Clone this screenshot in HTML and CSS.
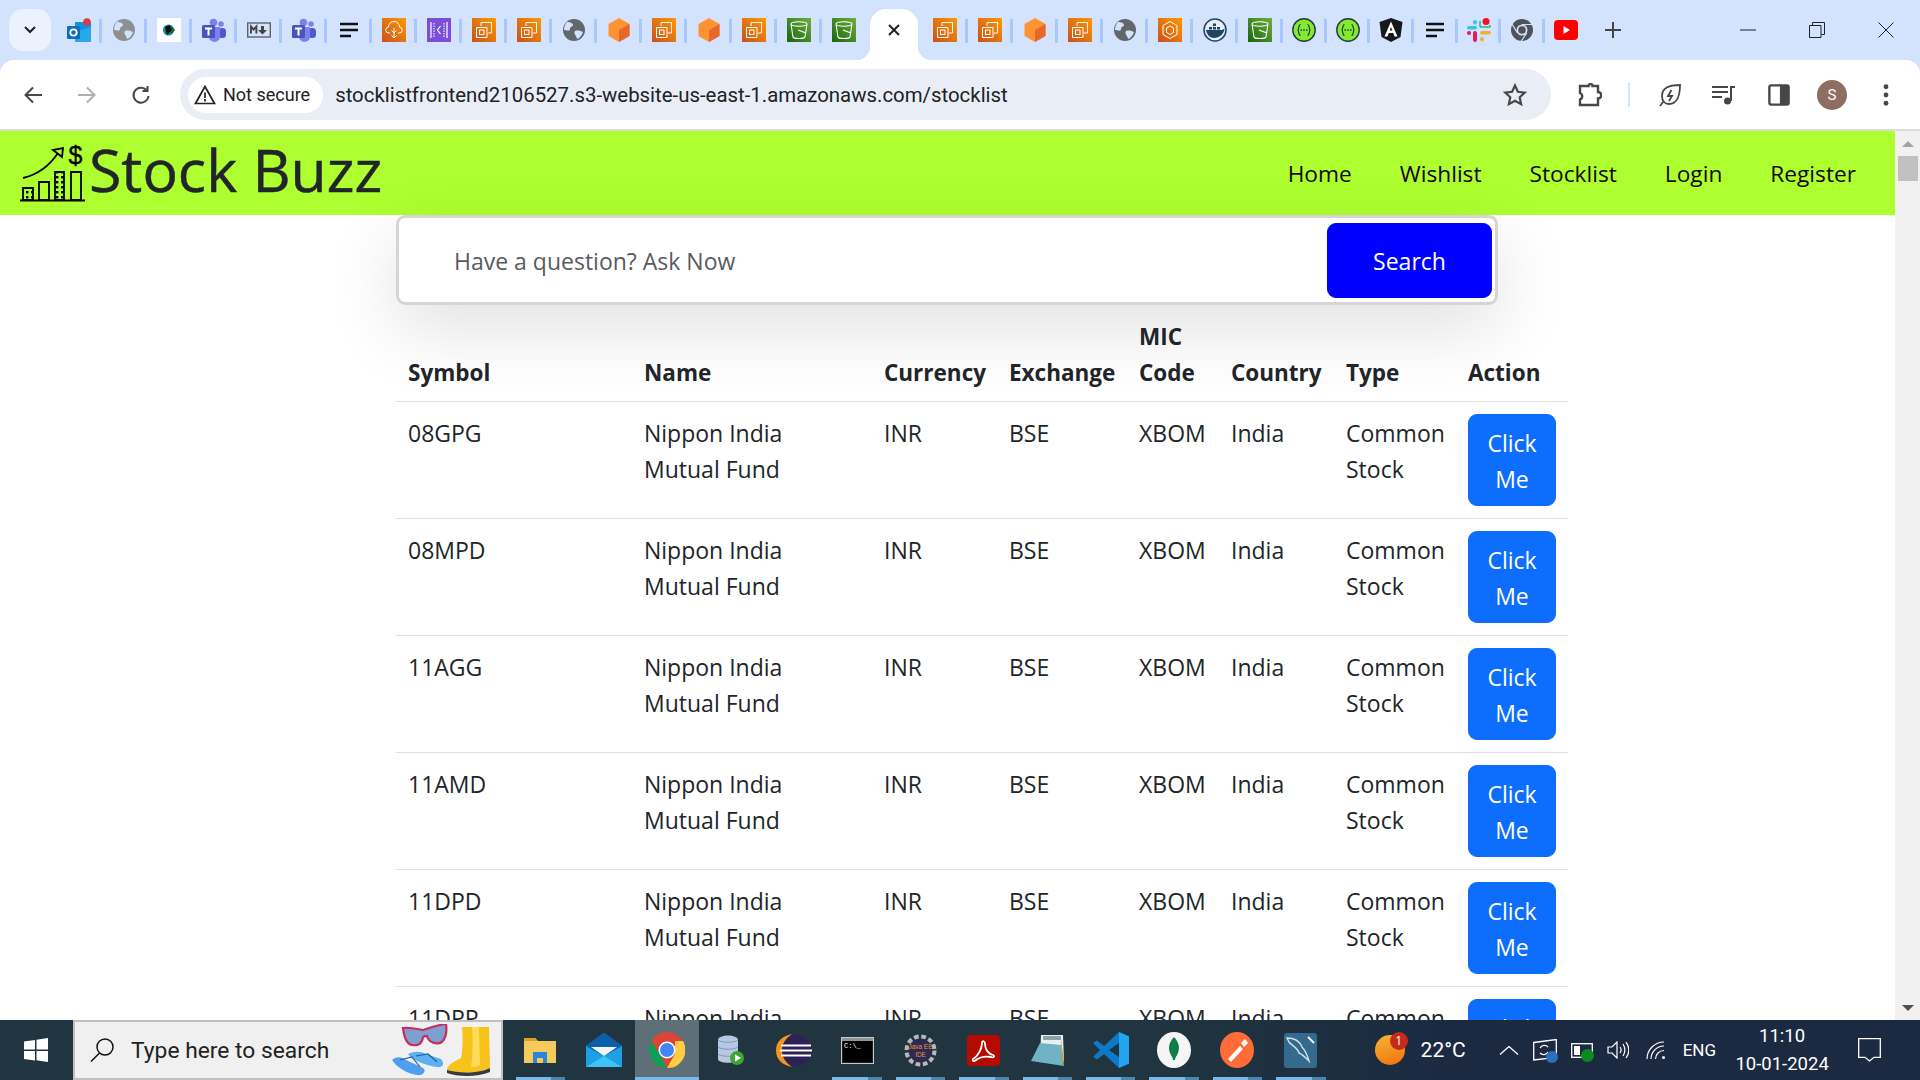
FILE: index.html
```html
<!DOCTYPE html>
<html lang="en">
<head>
    <meta charset="UTF-8">
    <title>Stock Buzz</title>
    <link rel="stylesheet" href="styles.css">
</head>
<body>
    <svg class="defs" width="0" height="0">
        <defs>
            <linearGradient id="orange" x1="0" y1="1" x2="1" y2="0"><stop offset="0" stop-color="#c8511b"/><stop offset="1" stop-color="#ff9900"/></linearGradient>
            <linearGradient id="green" x1="0" y1="1" x2="1" y2="0"><stop offset="0" stop-color="#1b660f"/><stop offset="1" stop-color="#6cae3e"/></linearGradient>
            <pattern id="dots" width="5" height="5" patternUnits="userSpaceOnUse"><rect x="1" y="1" width="2.400" height="2.400" fill="#000"/></pattern>
        </defs>
        <symbol id="ec2" viewBox="0 0 24 24">
            <rect width="24" height="24" fill="url(#orange)"/>
            <path d="M9 8V4.500h10.500V15H16M4.500 9.500H15V19.500H4.500z" fill="none" stroke="#fff" stroke-width="1"/>
            <rect x="7.500" y="12" width="4.500" height="4.500" fill="none" stroke="#fff" stroke-width="1"/>
        </symbol>
        <symbol id="s3" viewBox="0 0 24 24">
            <rect width="24" height="24" fill="url(#green)"/>
            <path d="M4 6c0-3 16-3 16 0l-2 13c-.5 2-11.500 2-12 0zM4 6c0 3 16 3 16 0M11 12l8 3" fill="none" stroke="#fff" stroke-width="1.100"/>
        </symbol>
        <symbol id="globe" viewBox="0 0 24 24">
            <circle cx="12" cy="12" r="11" fill="#63676b"/>
            <path d="M5 4c3 0 6 1 6 3s-3 1-3 4-4 1-6 1c0-3 1-6 3-8zM13 13c3-1 6 0 8 1-1 3-3 6-6 7 0-3-4-5-2-8z" fill="#d3e3fd"/>
        </symbol>
        <symbol id="globe-light" viewBox="0 0 24 24">
            <circle cx="12" cy="12" r="11" fill="#8f8f8f"/>
            <path d="M5 4c3 0 6 1 6 3s-3 1-3 4-4 1-6 1c0-3 1-6 3-8zM13 13c3-1 6 0 8 1-1 3-3 6-6 7 0-3-4-5-2-8z" fill="#d3e3fd"/>
        </symbol>
        <symbol id="cube" viewBox="0 0 24 24">
            <path d="M12 0l10.500 6v12L12 24 1.500 18V6z" fill="#ff9233"/>
            <path d="M12 12l10.500-6v12L12 24z" fill="#e8682a"/>
        </symbol>
        <symbol id="teams" viewBox="0 0 24 24">
            <circle cx="19" cy="6" r="2.800" fill="#7b83eb"/>
            <circle cx="11.500" cy="4.500" r="3.800" fill="#7b83eb"/>
            <rect x="16" y="10" width="8" height="10" rx="3.500" fill="#5059c9"/>
            <path d="M7 9h11v10a5.500 5 0 0 1-11 0z" fill="#7b83eb"/>
            <rect x="0" y="7" width="13" height="13" rx="1.500" fill="#4b53bc"/>
            <path d="M3 10.500h7M6.500 10.500V17.500" stroke="#fff" stroke-width="2"/>
        </symbol>
        <symbol id="lines" viewBox="0 0 24 24">
            <path d="M3 6h18M3 12h18M3 18h11" stroke="#111" stroke-width="2.400"/>
        </symbol>
        <symbol id="swagger" viewBox="0 0 24 24">
            <circle cx="12" cy="12" r="11.200" fill="#85ea2d" stroke="#25364a" stroke-width="1.400"/>
            <path d="M8.500 6.500c-2.500 0-1 5.500-3 5.500 2 0 .5 5.500 3 5.500M15.500 6.500c2.500 0 1 5.500 3 5.500-2 0-.5 5.500-3 5.500" fill="none" stroke="#173647" stroke-width="1.200"/>
            <path d="M8.500 12h7" stroke="#173647" stroke-width="1.400" stroke-dasharray="1.400 1.400"/>
        </symbol>
    </svg>

    <div class="tabstrip">
        <div class="tab-search"><svg width="14" height="10" viewBox="0 0 14 10"><path d="M2 2l5 5 5-5" fill="none" stroke="#202124" stroke-width="2"/></svg></div>
        <div class="tabs">
            <div class="tab">
                <svg class="fav" viewBox="0 0 24 24"><rect x="8" y="4" width="16" height="20" fill="#1490df"/><path d="M8 14l16-5v15H8z" fill="#28a8ea"/><rect x="0" y="8" width="13" height="13" rx="1" fill="#0f6cbd"/><circle cx="6.500" cy="14.500" r="3.200" fill="none" stroke="#fff" stroke-width="1.800"/><circle cx="20" cy="4" r="3.800" fill="#d93a45"/></svg>
            </div>
            <div class="tab"><svg class="fav"><use href="#globe-light"/></svg></div>
            <div class="tab">
                <svg class="fav" viewBox="0 0 24 24"><rect width="24" height="24" fill="#fff"/><circle cx="11.500" cy="12" r="5.500" fill="#0d8a8a"/><path d="M8 9l5-2 2 5-5 5z" fill="#111"/><path d="M14 9l3 3-3 3" fill="none" stroke="#1a5f2a" stroke-width="1.600"/></svg>
            </div>
            <div class="tab"><svg class="fav"><use href="#teams"/></svg></div>
            <div class="tab">
                <svg class="fav" viewBox="0 0 24 24"><rect x=".7" y="5" width="22.600" height="14" fill="none" stroke="#5f6368" stroke-width="1.400"/><path d="M4 15.500v-7l2.700 3 2.700-3v7" fill="none" stroke="#444" stroke-width="1.900"/><path d="M14 8h3v4h3l-4.500 4.500L11 12h3z" fill="#444"/></svg>
            </div>
            <div class="tab"><svg class="fav"><use href="#teams"/></svg></div>
            <div class="tab"><svg class="fav"><use href="#lines"/></svg></div>
            <div class="tab">
                <svg class="fav" viewBox="0 0 24 24"><rect width="24" height="24" fill="url(#orange)"/><path d="M8 15H7a3 3 0 0 1-.5-6 5.500 5.500 0 0 1 11 0 3 3 0 0 1-.5 6h-1M12 10v10M9.500 17.500L12 20l2.500-2.500M12 15l-2.500-2.500M12 15l2.500-2.500" fill="none" stroke="#fff" stroke-width="1"/></svg>
            </div>
            <div class="tab">
                <svg class="fav" viewBox="0 0 24 24"><rect width="24" height="24" fill="#7c4fd8"/><path d="M4 4v16M20 4v16" stroke="#fff" stroke-width="1.200"/><path d="M7 5v14M17 5v14" stroke="#fff" stroke-width="1" stroke-dasharray="1.500 1"/><path d="M13.500 8l-3 4 3 4" fill="none" stroke="#fff" stroke-width="1.200"/></svg>
            </div>
            <div class="tab"><svg class="fav"><use href="#ec2"/></svg></div>
            <div class="tab"><svg class="fav"><use href="#ec2"/></svg></div>
            <div class="tab"><svg class="fav"><use href="#globe"/></svg></div>
            <div class="tab"><svg class="fav"><use href="#cube"/></svg></div>
            <div class="tab"><svg class="fav"><use href="#ec2"/></svg></div>
            <div class="tab"><svg class="fav"><use href="#cube"/></svg></div>
            <div class="tab"><svg class="fav"><use href="#ec2"/></svg></div>
            <div class="tab"><svg class="fav"><use href="#s3"/></svg></div>
            <div class="tab no-sep"><svg class="fav"><use href="#s3"/></svg></div>
            <div class="tab active">
                <svg width="14" height="14" viewBox="0 0 14 14"><path d="M2 2l10 10M12 2L2 12" stroke="#202124" stroke-width="2"/></svg>
            </div>
            <div class="tab"><svg class="fav"><use href="#ec2"/></svg></div>
            <div class="tab"><svg class="fav"><use href="#ec2"/></svg></div>
            <div class="tab"><svg class="fav"><use href="#cube"/></svg></div>
            <div class="tab"><svg class="fav"><use href="#ec2"/></svg></div>
            <div class="tab"><svg class="fav"><use href="#globe"/></svg></div>
            <div class="tab">
                <svg class="fav" viewBox="0 0 24 24"><rect width="24" height="24" fill="url(#orange)"/><path d="M12 3.500l7 4v9l-7 4-7-4v-9zM12 8l3.500 2v4.500L12 16.500l-3.500-2V10z" fill="none" stroke="#fff" stroke-width="1"/></svg>
            </div>
            <div class="tab">
                <svg class="fav" viewBox="0 0 24 24"><circle cx="12" cy="12" r="11" fill="#e6eef6" stroke="#1f4566" stroke-width="1.500"/><path d="M3 12h16c2-1 2.500-1.500 2.500-1.500 0 5-5 9.500-10.500 9.500-4 0-7-3-8-8z" fill="#1f4566"/><path d="M6 9h3v2.500H6zM10 9h3v2.500h-3zM14 9h3v2.500h-3zM10 5.500h3V8h-3z" fill="#1f4566"/></svg>
            </div>
            <div class="tab"><svg class="fav"><use href="#s3"/></svg></div>
            <div class="tab tight"><svg class="fav"><use href="#swagger"/></svg></div>
            <div class="tab tight"><svg class="fav"><use href="#swagger"/></svg></div>
            <div class="tab tight">
                <svg class="fav" viewBox="0 0 24 24"><path d="M12 0l11.500 4-2 15L12 24l-9.500-5-2-15z" fill="#16181b"/><path d="M12 3.500L5.500 18.500h3l1.300-3.500h4.400l1.300 3.500h3zM10.700 12.500L12 9l1.300 3.500z" fill="#fff" fill-rule="evenodd"/></svg>
            </div>
            <div class="tab tight"><svg class="fav"><use href="#lines"/></svg></div>
            <div class="tab tight">
                <svg class="fav" viewBox="0 0 24 24"><rect x="0" y="8" width="10" height="3.500" rx="1.700" fill="#36c5f0"/><rect x="6" y="2" width="4" height="4.500" rx="2" fill="#36c5f0"/><path d="M13 9V3M13 9h10v-2" fill="none" stroke="#2eb67d" stroke-width="1.500"/><circle cx="19" cy="3.500" r="3.500" fill="#f0121f"/><rect x="13" y="13" width="11" height="3.500" rx="1.700" fill="#ecb22e"/><rect x="13" y="19" width="4" height="4.500" rx="2" fill="#ecb22e"/><rect x="0" y="13" width="4" height="4" rx="2" fill="#e01e5a"/><rect x="6" y="13" width="4" height="11" rx="2" fill="#e01e5a"/></svg>
            </div>
            <div class="tab tight">
                <svg class="fav" viewBox="0 0 24 24"><circle cx="12" cy="12" r="11" fill="#4f5357"/><circle cx="12" cy="12" r="5.500" fill="#d3e3fd"/><circle cx="12" cy="12" r="3.800" fill="#4f5357"/><path d="M12 6.500h10.500M7.200 14.800L2 6M16.800 14.800L11 23.500" stroke="#d3e3fd" stroke-width="1.200"/></svg>
            </div>
            <div class="tab tight no-sep">
                <svg class="fav" viewBox="0 0 24 24"><rect y="2" width="24" height="20" rx="4" fill="#f00"/><path d="M9.500 8l6.500 4-6.500 4z" fill="#fff"/></svg>
            </div>
        </div>
        <div class="new-tab"><svg width="16" height="16" viewBox="0 0 16 16"><path d="M8 0v16M0 8h16" stroke="#444" stroke-width="2"/></svg></div>
        <div class="win-buttons">
            <svg width="16" height="16" viewBox="0 0 16 16"><path d="M0 8h16" stroke="#202124"/></svg>
            <svg width="16" height="16" viewBox="0 0 16 16"><path d="M.5 3.500h11.500v12H.5zM3.500 3V.5h12V12.500H12.500" fill="none" stroke="#202124"/></svg>
            <svg width="16" height="16" viewBox="0 0 16 16"><path d="M.5.500l15 15M15.500.500l-15 15" stroke="#202124"/></svg>
        </div>
    </div>

    <div class="toolbar">
        <svg class="nav-icon" viewBox="0 0 20 20"><path d="M19 10H3M10 2.500L2.500 10l7.500 7.500" fill="none" stroke="#474747" stroke-width="2"/></svg>
        <svg class="nav-icon" viewBox="0 0 20 20"><path d="M1 10h16M10 2.500l7.500 7.500-7.500 7.500" fill="none" stroke="#b0b0b0" stroke-width="2"/></svg>
        <svg class="nav-icon" viewBox="0 0 20 20"><path d="M17.500 11a7.500 7.500 0 1 1-2-6M16.500 1v5h-5" fill="none" stroke="#474747" stroke-width="2"/></svg>
        <div class="omnibox">
            <div class="chip">
                <svg width="22" height="20" viewBox="0 0 22 20"><path d="M11 1.500L1.500 18.500h19z" fill="none" stroke="#202124" stroke-width="1.700"/><path d="M11 7.500v5.500M11 14v2.500" stroke="#202124" stroke-width="1.700"/></svg>
                <span>Not secure</span>
            </div>
            <span class="url">stocklistfrontend2106527.s3-website-us-east-1.amazonaws.com/stocklist</span>
            <svg class="star" viewBox="0 0 24 24"><path d="M12 2.500l2.900 6.300 6.900.8-5.100 4.700 1.400 6.800-6.100-3.400-6.100 3.400 1.400-6.800L2.200 9.600l6.900-.8z" fill="none" stroke="#474747" stroke-width="2.200"/></svg>
        </div>
        <svg class="tool-icon ext" viewBox="0 0 24 24"><path d="M8 3h2.500a2 2 0 0 1 4 0H20v6a3 3 0 0 1 0 6.500V22H2v-5.500a3.500 3.500 0 0 0 0-6.500V3z" fill="none" stroke="#474747" stroke-width="2.400"/></svg>
        <div class="tool-sep"></div>
        <svg class="tool-icon leaf" viewBox="0 0 24 24"><path d="M22 2C12 2 4 4 4 13c0 5 3 8 7 8 8 0 11-9 11-19zM2 23l3-4M13.500 7L10 13h4l-3 5" fill="none" stroke="#474747" stroke-width="1.800"/></svg>
        <svg class="tool-icon music" viewBox="0 0 24 20"><path d="M0 2h16M0 7h16M0 12h10M23 2h-4v14" fill="none" stroke="#474747" stroke-width="2"/><circle cx="15.500" cy="16" r="3.500" fill="#474747"/></svg>
        <svg class="tool-icon panel" viewBox="0 0 24 24"><rect x="1.500" y="1.500" width="21" height="21" rx="2" fill="none" stroke="#474747" stroke-width="2.600"/><rect x="13" y="2" width="9" height="20" fill="#474747"/></svg>
        <div class="avatar">S</div>
        <svg class="tool-icon dots" viewBox="0 0 6 24"><circle cx="3" cy="3" r="2.600" fill="#474747"/><circle cx="3" cy="12" r="2.600" fill="#474747"/><circle cx="3" cy="21" r="2.600" fill="#474747"/></svg>
    </div>

    <div class="page-area">
        <div class="page">
            <header class="navbar">
                <a class="brand">
                    <svg class="logo" width="66" height="57" viewBox="0 0 66 57">
                        <path d="M0 55.500h65" stroke="#000" stroke-width="2"/>
                        <path d="M3 43h10v12H3zM35 27h9v28h-9z" fill="url(#dots)" stroke="#000" stroke-width="1.800"/>
                        <path d="M19 37h10v18H19zM51 27h10v28H51z" fill="none" stroke="#000" stroke-width="1.800"/>
                        <path d="M3 33C20 29 30 20 38 8" fill="none" stroke="#000" stroke-width="1.800"/>
                        <path d="M33 5l10-2-1 9z" fill="none" stroke="#000" stroke-width="1.800"/>
                        <text x="48.500" y="19" class="logo-dollar">$</text>
                    </svg>
                    <span>Stock Buzz</span>
                </a>
                <nav class="nav-links">
                    <a>Home</a>
                    <a>Wishlist</a>
                    <a>Stocklist</a>
                    <a>Login</a>
                    <a>Register</a>
                </nav>
            </header>

            <form class="search-box">
                <span class="search-input">Have a question? Ask Now</span>
                <button type="button" class="search-btn">Search</button>
            </form>

            <table class="stock-table">
                <thead>
                    <tr>
                        <th class="c-symbol">Symbol</th>
                        <th class="c-name">Name</th>
                        <th class="c-currency">Currency</th>
                        <th class="c-exchange">Exchange</th>
                        <th class="c-mic">MIC Code</th>
                        <th class="c-country">Country</th>
                        <th class="c-type">Type</th>
                        <th class="c-action">Action</th>
                    </tr>
                </thead>
                <tbody id="stockRows"></tbody>
            </table>
        </div>
        <div class="scrollbar">
            <div class="arrow up"></div>
            <div class="thumb"></div>
            <div class="arrow down"></div>
        </div>
    </div>

    <footer class="taskbar">
        <svg class="start" width="24" height="24" viewBox="0 0 24 24"><path d="M0 3.500l11-1.500v9.500H0zM12.500 1.800L24 0v11.500H12.500zM0 13h11v9.500L0 21zM12.500 13H24v11l-11.500-1.700z" fill="#fff"/></svg>
        <div class="task-search">
            <svg width="24" height="24" viewBox="0 0 24 24"><circle cx="15" cy="9" r="8" fill="none" stroke="#111" stroke-width="1.500"/><path d="M9.500 15L1 23.500" stroke="#111" stroke-width="1.500"/></svg>
            <span>Type here to search</span>
            <svg class="search-art" width="98" height="52" viewBox="0 0 98 52">
                <path d="M11 4c7-1 14 1 20 2 6-2 14-5 23-6 1 7 0 14-4 18-5 3-13 1-15-6-2 0-3 0-4 1-1 7-5 9-11 8-6-1-8-9-9-17z" fill="#7f9fd0" stroke="#c62f5c" stroke-width="2.200"/>
                <path d="M0 36c5-4 10-3 14 0l17 8c4 3 0 8-6 7-9-1-21-8-25-15z" fill="#4f9fee"/>
                <path d="M16 30c7-3 12-3 18 0l15 5c4 4 2 9-3 8-6 0-26-6-30-13z" fill="#5fb0ee"/>
                <path d="M8 36l12-3 8 10M24 32l12-2 9 8" fill="none" stroke="#1d5fa8" stroke-width="1.200"/>
                <path d="M70 3h27l1 41c-10 5-30 6-43 2 0-5 8-9 14-12 2-8 2-22 1-31z" fill="#f7c21a"/>
                <path d="M80 3h7l1 38c-4 2-7 2-9 2 2-12 2-28 1-40z" fill="#fddc5c"/>
                <path d="M55 46c14 4 33 3 43-2v4c-12 5-32 5-43 1z" fill="#3a3a3a"/>
            </svg>
        </div>
        <div class="task-apps">
            <div class="app open">
                <svg class="ic-folder" viewBox="0 0 32 26"><path d="M0 1h11l3 3h18v22H0z" fill="#f5c95b"/><path d="M0 1h11l3 3H0z" fill="#d8a325"/><path d="M9 26V15h14v11h-4v-5h-6v5z" fill="#2a86d8"/></svg>
            </div>
            <div class="app">
                <svg class="ic-mail" viewBox="0 0 36 34"><path d="M0 13L18 0l18 13v21H0z" fill="#1d9fe4"/><path d="M0 13L18 0l18 13-18 10z" fill="#0a5fa8"/><path d="M5 14h26L18 23z" fill="#f2f4f6"/><path d="M0 34l18-11 18 11z" fill="#3bc4f4"/></svg>
            </div>
            <div class="app active open">
                <svg class="ic-chrome" viewBox="0 0 36 36"><circle cx="18" cy="18" r="18" fill="#db4437"/><path d="M18 36a18 18 0 0 1-15.600-27L11 22z" fill="#0f9d58"/><path d="M34 9A18 18 0 0 1 18 36l8-14 0-13z" fill="#ffcd40"/><circle cx="18" cy="18" r="8.500" fill="#fff"/><circle cx="18" cy="18" r="7" fill="#4285f4"/></svg>
            </div>
            <div class="app">
                <svg class="ic-db" viewBox="0 0 27 30"><path d="M1 5c0-6 20-6 20 0v19c0 5-20 5-20 0z" fill="#b6c8e2"/><path d="M1 12c3 3 17 3 20 0M1 19c3 3 17 3 20 0M1 5c3 3 17 3 20 0" fill="none" stroke="#7f98bd"/><circle cx="20" cy="23" r="7" fill="#3fa535"/><path d="M18 19.500l6 3.500-6 3.500z" fill="#fff"/></svg>
            </div>
            <div class="app">
                <svg class="ic-eclipse" viewBox="0 0 36 33"><circle cx="20" cy="16.500" r="15.500" fill="#2c2255"/><path d="M16 0C6 2 0 8 0 16.500S6 31 16 33C9 28 6 23 6 16.500S9 5 16 0z" fill="#f7941e"/><path d="M5 11.500h30M4 16.500h32M5 21.500h30" stroke="#fff" stroke-width="2"/></svg>
            </div>
            <div class="app open">
                <svg class="ic-cmd" viewBox="0 0 33 27"><rect x=".5" y=".5" width="32" height="26" fill="#222" stroke="#c8c8c8"/><rect x="2" y="4" width="29" height="21" fill="#000"/><path d="M1 1h31v3H1z" fill="#8f9498"/><text x="3" y="11" class="cmd-text">C:\_</text></svg>
            </div>
            <div class="app open">
                <svg class="ic-gear" viewBox="0 0 36 36"><circle cx="18" cy="18" r="15" fill="none" stroke="#b8b8b8" stroke-width="5" stroke-dasharray="5 2.900"/><circle cx="18" cy="18" r="13" fill="#2a2a55"/><text x="18" y="16" class="ide-text">Java EE</text><text x="18" y="25" class="ide-text">IDE</text></svg>
            </div>
            <div class="app open">
                <svg class="ic-pdf" viewBox="0 0 33 31"><rect width="33" height="31" rx="4" fill="#b30b00"/><path d="M6 24c5-3 9-10 9-16 0-3 3-2 3 1 0 6 4 10 8 11 2 1 1 3-2 2-5-1-11 0-15 3-2 2-4 1-3-1z" fill="none" stroke="#fff" stroke-width="1.800"/></svg>
            </div>
            <div class="app open">
                <svg class="ic-note" viewBox="0 0 33 31"><path d="M10 0h22l1 27-24-2z" fill="#e6f0f2"/><path d="M9 8l21 2 3 21-33-5z" fill="#6fb3c4"/><path d="M12 1h18v4H12z" fill="#8fa1a8"/><path d="M30 3l3 24-2 2z" fill="#c79a3a"/></svg>
            </div>
            <div class="app open">
                <svg class="ic-code" viewBox="0 0 36 36"><path d="M26 0l10 4.500v27L26 36 11 22l-7 5.500-4-2.500 7-7-7-7 4-2.500L11 14z" fill="#0e79c9"/><path d="M26 0l10 4.500v27L26 36z" fill="#23a4ee"/><path d="M26 11l-10 7 10 7z" fill="#1f3440"/></svg>
            </div>
            <div class="app open">
                <svg class="ic-round" viewBox="0 0 34 36"><ellipse cx="17" cy="18" rx="17" ry="18" fill="#f5f5f5"/><path d="M17 5c5 5 6 11 4 16-1 3-3 4-3 7h-2c0-3-2-4-3-7-2-5-1-11 4-16z" fill="#0f7c4e"/></svg>
            </div>
            <div class="app open">
                <svg class="ic-round" viewBox="0 0 34 36"><ellipse cx="17" cy="18" rx="17" ry="18" fill="#ff6c37"/><path d="M8 27l12-13 3 3-12 13zM21 11l4-4 3 4-4 4z" fill="#fff"/></svg>
            </div>
            <div class="app open">
                <svg class="ic-mysql" viewBox="0 0 33 35"><rect width="33" height="35" rx="3" fill="#346a8d"/><path d="M3 5c8 0 13 4 15 9 3 3 5 7 7 14-4-4-7-7-10-8-1-5-8-8-10-11z" fill="none" stroke="#cfe0ea" stroke-width="1.400"/><path d="M24 4l6 6" stroke="#fff" stroke-width="2"/></svg>
            </div>
        </div>
        <div class="weather">
            <div class="weather-icon"><span class="badge">1</span></div>
            <span class="temp">22°C</span>
        </div>
        <div class="tray">
            <svg width="20" height="9" viewBox="0 0 20 9"><path d="M1 8.500l9-8 9 8" fill="none" stroke="#fff" stroke-width="1.300"/></svg>
            <div class="tray-sync">
                <svg width="24" height="22" viewBox="0 0 24 22"><path d="M.7 3.500l22.600-3v18L.7 21z" fill="none" stroke="#fff" stroke-width="1.300"/><path d="M7 9a5 5 0 0 1 8-1M15 13a5 5 0 0 1-8 1" fill="none" stroke="#fff" stroke-width="1.300"/></svg>
                <span class="tray-dot"></span>
            </div>
            <div class="tray-batt">
                <svg width="22" height="15" viewBox="0 0 22 15"><rect x=".7" y=".7" width="20.600" height="13.600" fill="none" stroke="#fff" stroke-width="1.300"/><rect x="3" y="3" width="6" height="9" fill="#fff"/></svg>
                <span class="batt-leaf"></span>
            </div>
            <svg width="22" height="18" viewBox="0 0 22 18"><path d="M1 6h4l5-5v16l-5-5H1z" fill="none" stroke="#fff" stroke-width="1.200"/><path d="M13 6c1.500 2 1.500 4 0 6M16 3c2.500 4 2.500 8 0 12M19 1c3.500 5 3.500 11 0 16" fill="none" stroke="#fff" stroke-width="1.200"/></svg>
            <svg class="wifi" width="20" height="18" viewBox="0 0 20 18"><path d="M1 18A17 17 0 0 1 18 1M5 18A13 13 0 0 1 18 5M9.500 18a8.500 8.500 0 0 1 8.500-8.500" fill="none" stroke="#fff" stroke-width="1.200"/><circle cx="17.500" cy="16.500" r="1.500" fill="#fff"/></svg>
            <span class="lang">ENG</span>
        </div>
        <div class="clock">
            <span>11:10</span>
            <span>10-01-2024</span>
        </div>
        <svg class="notify" width="23" height="24" viewBox="0 0 23 24"><path d="M.7.700h21.600v18.600H16L11.500 23 7 19.300H.7z" fill="none" stroke="#fff" stroke-width="1.300"/></svg>
    </footer>

    <script src="app.js"></script>
</body>
</html>
```

FILE: styles.css
```css
* {
    box-sizing: border-box;
}

html, body {
    margin: 0;
    height: 100%;
    overflow: hidden;
}

body {
    display: flex;
    flex-direction: column;
    width: 1920px;
    height: 1080px;
    font-family: 'Open Sans', 'Noto Sans', Arial, sans-serif;
    color: #212529;
    background: #d3e3fd;
}

.defs {
    position: absolute;
}

/* browser tab strip */
.tabstrip {
    display: flex;
    align-items: flex-start;
    height: 60px;
    padding: 9px 0 0 9px;
    flex-shrink: 0;
}

.tab-search {
    display: flex;
    align-items: center;
    justify-content: center;
    width: 42px;
    height: 42px;
    margin-right: 5px;
    border-radius: 14px;
    background: #ebf2fe;
}

.tabs {
    display: flex;
    height: 24px;
    margin-top: 9px;
}

.tab {
    position: relative;
    display: flex;
    align-items: center;
    justify-content: center;
    width: 45px;
    height: 24px;
}

.tab::after {
    content: "";
    position: absolute;
    right: -1px;
    top: 1px;
    width: 3px;
    height: 24px;
    background: #a8c7fa;
}

.tab.no-sep::after {
    display: none;
}

.tab.tight {
    width: 43.7px;
}

.tab.active {
    width: 48px;
    height: 51px;
    margin: -9px 4px 0;
    padding-bottom: 9px;
    border-radius: 16px 16px 0 0;
    background: #fff;
}

.tab.active::before,
.tab.active::after {
    content: "";
    position: absolute;
    top: auto;
    bottom: 0;
    width: 14px;
    height: 14px;
}

.tab.active::before {
    left: -14px;
    background: radial-gradient(circle at 0 0, transparent 14px, #fff 14.5px);
}

.tab.active::after {
    right: -14px;
    background: radial-gradient(circle at 100% 0, transparent 14px, #fff 14.5px);
}

.fav {
    width: 24px;
    height: 24px;
}

.new-tab {
    display: flex;
    margin: 13px 0 0 17px;
}

.win-buttons {
    display: flex;
    gap: 53px;
    align-items: center;
    margin: 13px 0 0 auto;
    padding-right: 26px;
}

/* address bar */
.toolbar {
    display: flex;
    align-items: center;
    height: 69px;
    padding: 0 23px 0 0;
    background: #fff;
    border-radius: 14px 14px 0 0;
    flex-shrink: 0;
}

.nav-icon {
    width: 20px;
    height: 20px;
    margin-left: 23px;
}

.nav-icon + .nav-icon {
    margin-left: 34px;
}

.omnibox {
    display: flex;
    align-items: center;
    width: 1371px;
    height: 51px;
    margin-left: 29px;
    padding: 0 24px 0 8px;
    border-radius: 26px;
    background: #e9eef6;
}

.chip {
    display: flex;
    align-items: center;
    gap: 7px;
    height: 36px;
    padding: 0 13px 0 6px;
    border-radius: 18px;
    background: #fff;
    color: #202124;
}

.chip span {
    font-family: 'Roboto', sans-serif;
    font-size: 18px;
}

.url {
    margin-left: 12px;
    font-family: 'Roboto', sans-serif;
    font-size: 20.4px;
    color: #202124;
}

.star {
    width: 24px;
    height: 24px;
    margin-left: auto;
}

.tool-icon {
    flex-shrink: 0;
}

.ext {
    width: 24px;
    height: 24px;
    margin-left: 27px;
}

.tool-sep {
    width: 2px;
    height: 24px;
    margin-left: 26px;
    background: #d3e3fd;
}

.leaf {
    width: 24px;
    height: 24px;
    margin-left: 28px;
}

.music {
    width: 24px;
    height: 20px;
    margin-left: 30px;
}

.panel {
    width: 22px;
    height: 22px;
    margin-left: 32px;
}

.avatar {
    display: flex;
    align-items: center;
    justify-content: center;
    width: 30px;
    height: 30px;
    margin-left: 27px;
    border-radius: 50%;
    background: #8d6e63;
    color: #fff;
    font-family: 'Roboto', sans-serif;
    font-size: 15px;
    flex-shrink: 0;
}

.dots {
    width: 6px;
    height: 22px;
    margin-left: 36px;
}

/* page */
.page-area {
    display: flex;
    flex: 1;
    min-height: 0;
    border-top: 2px solid #dcdcdc;
    background: #fff;
}

.page {
    flex: 1;
    min-width: 0;
    overflow: hidden;
    font-size: 23px;
    line-height: 36px;
}

.navbar {
    display: flex;
    align-items: center;
    justify-content: space-between;
    height: 84px;
    padding: 0 39px 0 20px;
    background: #adff2f;
}

.brand {
    display: flex;
    align-items: flex-start;
    height: 84px;
    padding-top: 2px;
    color: #212529;
    font-size: 59px;
    font-weight: 500;
    line-height: 72px;
    -webkit-text-stroke: 0.5px #212529;
}

.logo {
    margin: 12px 3px 0 0;
    overflow: visible;
}

.logo-dollar {
    font-family: 'Liberation Sans', sans-serif;
    font-size: 25px;
    fill: #000;
    stroke: #000;
    stroke-width: 0.4px;
}

.nav-links {
    display: flex;
    gap: 48px;
    padding-top: 2px;
    color: #14080e;
    font-size: 22.7px;
}

.search-box {
    display: flex;
    align-items: center;
    justify-content: space-between;
    width: 1102px;
    height: 90px;
    margin-left: 396px;
    padding: 4px 3px;
    border: 3px solid #d6d4d5;
    border-radius: 9px;
    box-shadow: 0 24px 72px rgba(0, 0, 0, 0.12);
}

.search-input {
    padding: 2px 0 0 52px;
    color: #595c5f;
}

.search-btn {
    width: 165px;
    height: 75px;
    padding-top: 3px;
    border: 1px solid #0000ff;
    border-radius: 9px;
    background: #0000ff;
    color: #fff;
    font: inherit;
}

.stock-table {
    width: 1172px;
    margin-left: 396px;
    border-collapse: collapse;
    table-layout: fixed;
}

.stock-table th,
.stock-table td {
    padding: 13px 12px 11px;
    border-bottom: 1px solid #dee2e6;
    text-align: left;
    vertical-align: top;
}

.stock-table th {
    padding: 14px 12px 10px;
    vertical-align: bottom;
    font-size: 22.5px;
    font-weight: 700;
}

.c-symbol { width: 236px; }
.c-name { width: 240px; }
.c-currency { width: 125px; }
.c-exchange { width: 130px; }
.c-mic { width: 92px; }
.c-country { width: 115px; }
.c-type { width: 122px; }
.c-action { width: 112px; }

.click-btn {
    display: block;
    width: 88px;
    margin: -1px 0 1px;
    padding: 10px 12px 8px;
    border: 1px solid #0d6efd;
    border-radius: 9px;
    background: #0d6efd;
    color: #fff;
    font: inherit;
    text-align: center;
}

.scrollbar {
    display: flex;
    flex-direction: column;
    align-items: center;
    width: 25px;
    background: #f1f1f1;
}

.arrow {
    width: 0;
    height: 0;
    border-left: 6px solid transparent;
    border-right: 6px solid transparent;
}

.arrow.up {
    margin-top: 10px;
    border-bottom: 6px solid #a3a3a3;
}

.arrow.down {
    margin-top: auto;
    margin-bottom: 9px;
    border-top: 6px solid #505050;
}

.thumb {
    width: 20px;
    height: 25px;
    margin-top: 9px;
    background: #c1c1c1;
}

/* windows taskbar */
.taskbar {
    display: flex;
    align-items: center;
    height: 60px;
    flex-shrink: 0;
    background: linear-gradient(90deg, #20353f 0, #20353f 60%, #1b2a41 75%);
    color: #fff;
}

.start {
    margin: 0 25px 0 24px;
    flex-shrink: 0;
}

.task-search {
    display: flex;
    align-items: center;
    width: 430px;
    height: 60px;
    padding: 0 11px 0 15px;
    border: 2px solid #c0c0c0;
    background: #f0f0f0;
    color: #222;
    font-family: 'Roboto', sans-serif;
    font-size: 22.8px;
    flex-shrink: 0;
}

.task-search span {
    margin-left: 17px;
}

.search-art {
    margin-left: auto;
}

.task-apps {
    display: flex;
    align-items: stretch;
    height: 60px;
    margin-left: 5.5px;
    flex-shrink: 0;
}

.app {
    position: relative;
    display: flex;
    align-items: center;
    justify-content: center;
    width: 63.4px;
    height: 60px;
}

.ic-folder { width: 32px; height: 26px; }
.ic-mail { width: 36px; height: 34px; }
.ic-chrome { width: 36px; height: 36px; }
.ic-db { width: 27px; height: 30px; }
.ic-eclipse { width: 36px; height: 33px; }
.ic-cmd { width: 33px; height: 27px; }
.ic-gear { width: 33px; height: 33px; }
.ic-pdf { width: 33px; height: 31px; }
.ic-note { width: 33px; height: 31px; }
.ic-code { width: 36px; height: 36px; }
.ic-round { width: 34px; height: 36px; }
.ic-mysql { width: 33px; height: 35px; }

.app.open::after {
    content: "";
    position: absolute;
    left: 7px;
    right: 7px;
    bottom: 0;
    height: 3px;
    background: linear-gradient(90deg, #76b9ed 0, #76b9ed 72%, #4a86b0 72%);
}

.app.active {
    background: #5f6f78;
}

.app.active::after {
    left: 0;
    right: 0;
    background: #76b9ed;
}

.cmd-text {
    font-family: 'Liberation Mono', monospace;
    font-size: 7px;
    fill: #fff;
}

.ide-text {
    font-family: 'Liberation Sans', sans-serif;
    font-size: 7px;
    fill: #f7941e;
    text-anchor: middle;
}

.weather {
    display: flex;
    align-items: center;
    gap: 16px;
    margin-left: 42px;
    flex-shrink: 0;
}

.weather-icon {
    position: relative;
    width: 30px;
    height: 30px;
    border-radius: 50%;
    background: linear-gradient(160deg, #f5b82e, #f0700e);
}

.badge {
    position: absolute;
    top: -3px;
    right: -3px;
    width: 18px;
    height: 18px;
    border-radius: 50%;
    background: #c42b1c;
    color: #fff;
    font-size: 12px;
    line-height: 18px;
    text-align: center;
}

.temp {
    font-family: 'Roboto', sans-serif;
    font-size: 21px;
}

.tray {
    display: flex;
    align-items: center;
    gap: 14px;
    margin-left: 33px;
    flex-shrink: 0;
}

.tray-sync,
.tray-batt {
    position: relative;
    display: flex;
}

.tray-dot {
    position: absolute;
    right: -1px;
    bottom: -2px;
    width: 12px;
    height: 12px;
    border-radius: 50%;
    background: #2d6fbf;
}

.batt-leaf {
    position: absolute;
    right: -1px;
    bottom: -4px;
    width: 13px;
    height: 13px;
    border-radius: 50%;
    background: #0a8a1f;
}

.wifi {
    margin-left: 3px;
}

.lang {
    margin-left: 3px;
    font-family: 'Roboto', sans-serif;
    font-size: 17px;
}

.clock {
    display: flex;
    flex-direction: column;
    align-items: center;
    width: 100px;
    margin-left: 16px;
    font-family: 'Roboto', sans-serif;
    font-size: 18.5px;
    line-height: 28px;
    flex-shrink: 0;
}

.notify {
    margin-left: 26px;
    flex-shrink: 0;
}
```

FILE: app.js
```js
const stocks = ["08GPG", "08MPD", "11AGG", "11AMD", "11DPD", "11DPP"];

const rows = document.getElementById("stockRows");

stocks.forEach((symbol) => {
    const row = document.createElement("tr");
    row.innerHTML = `
        <td>${symbol}</td>
        <td>Nippon India Mutual Fund</td>
        <td>INR</td>
        <td>BSE</td>
        <td>XBOM</td>
        <td>India</td>
        <td>Common Stock</td>
        <td><button type="button" class="click-btn">Click Me</button></td>
    `;
    rows.appendChild(row);
});
```
